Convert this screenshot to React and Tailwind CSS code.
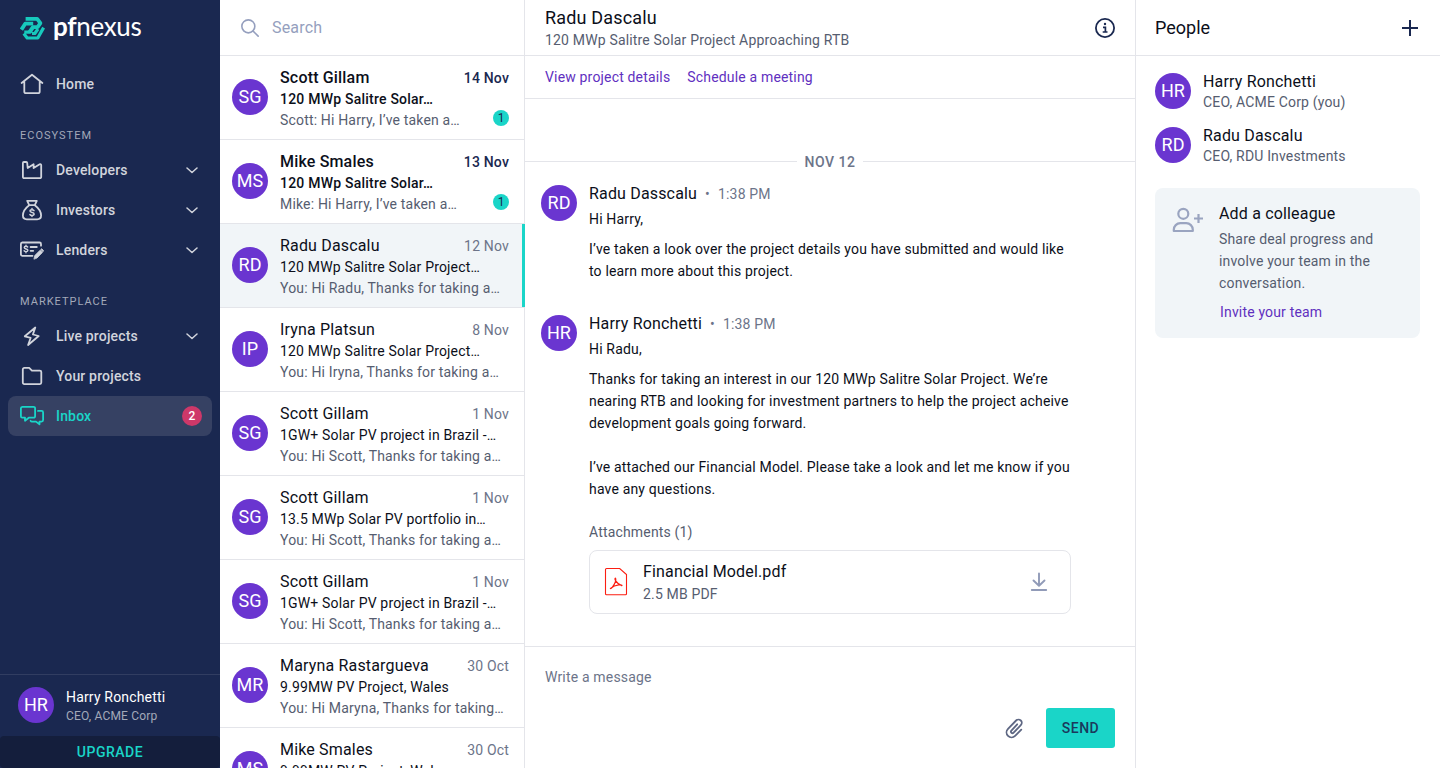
const PURPLE_AVATAR =
  'flex size-9 shrink-0 items-center justify-center rounded-full bg-[#6a35d0] text-lg tracking-normal text-white';

function Avatar({ initials }) {
  return <div className={PURPLE_AVATAR}>{initials}</div>;
}

function Icon({ children, className = 'size-6', width = 1.8 }) {
  return (
    <svg
      viewBox="0 0 24 24"
      className={`shrink-0 ${className}`}
      fill="none"
      stroke="currentColor"
      strokeWidth={width}
      strokeLinecap="round"
      strokeLinejoin="round"
    >
      {children}
    </svg>
  );
}

const icons = {
  home: (
    <path d="M1.6 11 12 2.8 22.4 11M4.3 9.2v10.2a1.8 1.8 0 0 0 1.8 1.8h11.8a1.8 1.8 0 0 0 1.8-1.8V9.2" />
  ),
  factory: (
    <path d="M2.9 19V5a1 1 0 0 1 1-1h2.3a1 1 0 0 1 1 .9L7.7 10l5.9-3.8v3.9l6.1-3.9a1 1 0 0 1 1.5.9V19a1.2 1.2 0 0 1-1.2 1.2H4.1A1.2 1.2 0 0 1 2.9 19Z" />
  ),
  bag: (
    <>
      <path d="M9.2 7.2 7.2 2.9h9.6l-2 4.3ZM9.2 7.2C5.6 9.9 2.9 13.6 2.9 17.6c0 2.4 1.5 3.7 3.9 3.7h10.4c2.4 0 3.9-1.3 3.9-3.7 0-4-2.7-7.7-6.3-10.4" />
      <path strokeWidth="1.5" d="M14 12.6c-.4-.6-1.1-.9-2-.9-1.2 0-2 .5-2 1.4 0 2 4.1.8 4.1 2.9 0 .9-.9 1.4-2.1 1.4-1 0-1.7-.3-2.1-.9M12 10.6v1M12 17.5v1" />
    </>
  ),
  lender: (
    <>
      <path d="M12.5 17.8H2.3A1.5 1.5 0 0 1 .9 16.3V6A1.5 1.5 0 0 1 2.3 4.5h17.2A1.5 1.5 0 0 1 21 6v1.7" />
      <path strokeWidth="1.4" d="M7.7 9c-.4-.5-1-.7-1.7-.7-1.1 0-1.8.5-1.8 1.3 0 1.9 3.7.8 3.7 2.7 0 .8-.8 1.3-1.9 1.3-.9 0-1.5-.3-1.9-.8M6 7.3v1M6 13.7v1" />
      <path d="M10.6 9h6.2M10.6 12.8h2.6" />
      <path fill="currentColor" strokeWidth=".8" d="m14 20.8.8-3.3 5.3-5.3 2.3 2.3-5.3 5.4ZM20.9 11.400l.8-.7 2 2-.7.9Z" />
    </>
  ),
  bolt: <path d="M15.3 3.5 4.8 12.3l5.9 1.5-2.6 7.2L18.7 12l-5.8-1.5Z" />,
  folder: (
    <path d="M2.8 18.6V5.4A1.5 1.5 0 0 1 4.3 3.9h4.9l2.7 2.7h7.9a1.5 1.5 0 0 1 1.5 1.5v10.5a1.5 1.5 0 0 1-1.5 1.5H4.3a1.5 1.5 0 0 1-1.5-1.5Z" />
  ),
  chat: (
    <>
      <path d="M5 13.7H2.3A1.5 1.5 0 0 1 .9 12.2V4.3A1.5 1.5 0 0 1 2.3 2.8h11.3a1.5 1.5 0 0 1 1.5 1.5v7.9a1.5 1.5 0 0 1-1.5 1.5H8.8L5 16.7Z" />
      <path d="M18 6.9h3.6a1.5 1.5 0 0 1 1.5 1.5v7.7a1.5 1.5 0 0 1-1.5 1.5h-2.1v2.7l-3.5-2.7h-4.1a1.5 1.5 0 0 1-1.3-.8" />
    </>
  ),
};

function Logo() {
  return (
    <div className="flex h-14 items-center pl-5">
      <svg viewBox="0 0 25 23" className="h-[23px] w-[25px]" fill="none" stroke="#17c9bd" strokeWidth="3.8" strokeLinejoin="round">
        <path d="M5.6 1.9H17.2L20.4 6.200 17.600 10.200H12.700L9.500 15" />
        <path d="M1.400 12.600 5.200 6.700H13.200" />
        <path d="M4.300 15.200H10.200L12.600 11.500" strokeWidth="3.200" />
        <path d="M3.800 16.500 7.200 21H17.800L23.600 10.600M12 16.500H14.800L18 12" strokeWidth="3.200" />
      </svg>
      <div className="ml-2 -mt-1 font-[Lato] text-[26px] leading-7 tracking-[-0.3px] text-white">
        <span className="font-bold">pf</span>
        <span>nexus</span>
      </div>
    </div>
  );
}

function NavItem({ icon, label, chevron, active, count }) {
  return (
    <div
      className={`mx-2 flex h-10 items-center rounded-lg px-3 text-sm font-medium ${
        active ? 'bg-[#364163] text-[#1ad5c8]' : 'text-[#d1d4dc]'
      }`}
    >
      <Icon>{icons[icon]}</Icon>
      <span className="ml-3">{label}</span>
      {chevron && (
        <Icon className="mr-0.5 ml-auto size-3" width={3}>
          <path d="m2 8 10 9 10-9" />
        </Icon>
      )}
      {count && (
        <span className="-mr-0.5 ml-auto flex size-5 items-center justify-center rounded-full bg-[#ce3869] text-xs tracking-normal text-white">
          {count}
        </span>
      )}
    </div>
  );
}

function NavHeading({ children }) {
  return <div className="mt-6 mb-1.5 pl-5 text-[11px] leading-4 tracking-[1px] text-[#a3a9b9]">{children}</div>;
}

function Sidebar() {
  return (
    <aside className="flex w-[220px] shrink-0 flex-col bg-[#1a2850]">
      <Logo />
      <nav className="mt-2 flex flex-col">
        <NavItem icon="home" label="Home" />
        <NavHeading>ECOSYSTEM</NavHeading>
        <NavItem icon="factory" label="Developers" chevron />
        <NavItem icon="bag" label="Investors" chevron />
        <NavItem icon="lender" label="Lenders" chevron />
        <NavHeading>MARKETPLACE</NavHeading>
        <NavItem icon="bolt" label="Live projects" chevron />
        <NavItem icon="folder" label="Your projects" />
        <NavItem icon="chat" label="Inbox" active count="2" />
      </nav>
      <div className="mt-auto flex h-[62px] items-start border-t border-[#313d61] pt-3 pl-[18px]">
        <Avatar initials="HR" />
        <div className="mt-px ml-3">
          <div className="text-sm leading-[19px] text-white">Harry Ronchetti</div>
          <div className="text-xs leading-[18px] text-[#a3a9b9]">CEO, ACME Corp</div>
        </div>
      </div>
      <div className="flex h-8 items-center justify-center rounded bg-[#141e3c] text-sm font-medium tracking-[0.5px] text-[#1ad5c8]">
        UPGRADE
      </div>
    </aside>
  );
}

const threads = [
  { initials: 'SG', name: 'Scott Gillam', date: '14 Nov', subject: '120 MWp Salitre Solar…', preview: 'Scott: Hi Harry, I’ve taken a…', unread: 1 },
  { initials: 'MS', name: 'Mike Smales', date: '13 Nov', subject: '120 MWp Salitre Solar…', preview: 'Mike: Hi Harry, I’ve taken a…', unread: 1 },
  { initials: 'RD', name: 'Radu Dascalu', date: '12 Nov', subject: '120 MWp Salitre Solar Project…', preview: 'You: Hi Radu, Thanks for taking a…', selected: true },
  { initials: 'IP', name: 'Iryna Platsun', date: '8 Nov', subject: '120 MWp Salitre Solar Project…', preview: 'You: Hi Iryna, Thanks for taking a…' },
  { initials: 'SG', name: 'Scott Gillam', date: '1 Nov', subject: '1GW+ Solar PV project in Brazil -…', preview: 'You: Hi Scott, Thanks for taking a…' },
  { initials: 'SG', name: 'Scott Gillam', date: '1 Nov', subject: '13.5 MWp Solar PV portfolio in…', preview: 'You: Hi Scott, Thanks for taking a…' },
  { initials: 'SG', name: 'Scott Gillam', date: '1 Nov', subject: '1GW+ Solar PV project in Brazil -…', preview: 'You: Hi Scott, Thanks for taking a…' },
  { initials: 'MR', name: 'Maryna Rastargueva', date: '30 Oct', subject: '9.99MW PV Project, Wales', preview: 'You: Hi Maryna, Thanks for taking…' },
  { initials: 'MS', name: 'Mike Smales', date: '30 Oct', subject: '9.99MW PV Project, Wales' },
];

function Thread({ initials, name, date, subject, preview, unread, selected }) {
  return (
    <div className={`relative flex h-21 shrink-0 border-b border-[#e4e5ea] pl-3 ${selected ? 'bg-[#f1f5f8]' : ''}`}>
      <div className="mt-[23px]">
        <Avatar initials={initials} />
      </div>
      <div className="ml-3 flex-1 pt-[11px] pr-[15px] text-sm leading-[21px] whitespace-nowrap">
        <div className="flex justify-between">
          <span className={`text-base leading-[21px] text-[#0c0f1a] ${unread ? 'font-medium' : ''}`}>{name}</span>
          <span className={`leading-[22px] ${unread ? 'font-medium text-[#1a2850]' : 'text-[#6c7489]'}`}>{date}</span>
        </div>
        <div className={`text-[#0c0f1a] ${unread ? 'font-medium tracking-[0.22px]' : ''}`}>{subject}</div>
        <div className="flex items-start justify-between text-[#565d70]">
          {preview}
          {unread && (
            <span className="flex size-4 items-center justify-center rounded-full bg-[#1ad5c8] text-xs leading-4 tracking-normal text-[#1a2850]">
              {unread}
            </span>
          )}
        </div>
      </div>
      {selected && <div className="absolute top-0 -right-px h-[83px] w-[3px] bg-[#1ad5c8]" />}
    </div>
  );
}

function ThreadList() {
  return (
    <section className="flex w-[305px] shrink-0 flex-col border-r border-[#e4e5ea]">
      <div className="flex h-14 shrink-0 items-center border-b border-[#e4e5ea] pl-5 text-base text-[#959fbe]">
        <Icon className="size-5" width={1.9}>
          <circle cx="10" cy="10" r="7.8" />
          <path d="m15.8 15.8 6 6" />
        </Icon>
        <span className="ml-3">Search</span>
      </div>
      {threads.map((t, i) => (
        <Thread key={i} {...t} />
      ))}
    </section>
  );
}

function Message({ initials, name, time, children }) {
  return (
    <div className="flex pl-4">
      <Avatar initials={initials} />
      <div className="ml-3 w-[482px] text-sm leading-[22px] whitespace-nowrap text-[#0c0f1a]">
        <div className="flex h-[18px] items-center">
          <span className="text-base">{name}</span>
          <span className="mx-2 text-[#6c7489]">•</span>
          <span className="text-[#6c7489]">{time}</span>
        </div>
        {children}
      </div>
    </div>
  );
}

function Conversation() {
  return (
    <main className="flex w-[610px] shrink-0 flex-col">
      <header className="flex h-14 shrink-0 items-center justify-between border-b border-[#e4e5ea] px-5">
        <div>
          <div className="text-lg leading-6 text-[#0c0f1a]">Radu Dascalu</div>
          <div className="text-sm leading-5 text-[#565d70]">120 MWp Salitre Solar Project Approaching RTB</div>
        </div>
        <svg viewBox="0 0 20 20" className="size-5 text-[#1a2850]" fill="none" stroke="currentColor">
          <circle cx="10" cy="10" r="9.1" strokeWidth="1.8" />
          <path d="M8 9.3h2.4v4.4M7.700 14h4.800" strokeWidth="1.7" />
          <circle cx="10" cy="6" r="1.2" fill="currentColor" stroke="none" />
        </svg>
      </header>
      <div className="flex h-[43px] shrink-0 items-center gap-[17px] border-b border-[#e4e5ea] px-5 text-sm text-[#5f30bf]">
        <span>View project details</span>
        <span>Schedule a meeting</span>
      </div>
      <div className="flex flex-1 flex-col">
        <div className="mt-[52px] flex h-5 items-center gap-2">
          <div className="h-px flex-1 bg-[#e4e5ea]" />
          <span className="pt-0.5 text-sm leading-5 font-medium tracking-[0.5px] text-[#6c7489]">NOV 12</span>
          <div className="h-px flex-1 bg-[#e4e5ea]" />
        </div>
        <div className="mt-3.5">
          <Message initials="RD" name="Radu Dasscalu" time="1:38 PM">
            <p className="mt-[5px]">Hi Harry,</p>
            <p className="mt-2">
              I’ve taken a look over the project details you have submitted and would like
              <br />
              to learn more about this project.
            </p>
          </Message>
        </div>
        <div className="mt-[33px]">
          <Message initials="HR" name="Harry Ronchetti" time="1:38 PM">
            <p className="mt-[5px]">Hi Radu,</p>
            <p className="mt-2">
              Thanks for taking an interest in our 120 MWp Salitre Solar Project. We’re
              <br />
              nearing RTB and looking for investment partners to help the project acheive
              <br />
              development goals going forward.
            </p>
            <p className="mt-[22px]">
              I’ve attached our Financial Model. Please take a look and let me know if you
              <br />
              have any questions.
            </p>
            <div className="mt-[21px] text-[#565d70]">Attachments (1)</div>
            <div className="mt-[7px] flex h-16 items-center rounded-lg border border-[#e4e5ea] pr-[19px] pl-3.5">
              <svg viewBox="0 0 24 30" className="h-[30px] w-6" fill="none" stroke="#fb1e12" strokeWidth="1.1">
                <path d="M2.5 1.5h13.2l6.800 6v19.3a1 1 0 0 1-1 1h-19a1 1 0 0 1-1-1V2.5a1 1 0 0 1 1-1Z" />
                <path strokeWidth="1.3" strokeLinejoin="round" d="M11.5 11.200c-1.500 0 .5 5.300 6.200 7.400 1.600-.8-5.600-2-11.300 2.800.8 1.300 6.500-6.500 5.100-10.200Z" />
              </svg>
              <div className="mt-0.5 ml-[15px]">
                <div className="text-base leading-[22px]">Financial Model.pdf</div>
                <div className="text-[#565d70]">2.5 MB PDF</div>
              </div>
              <Icon className="ml-auto size-6 text-[#919bb8]" width={1.9}>
                <path d="M12 3.5v12M6.5 10.5l5.5 5.3 5.5-5.3M4.8 20h14.4" />
              </Icon>
            </div>
          </Message>
        </div>
      </div>
      <footer className="flex h-[122px] shrink-0 flex-col border-t border-[#e4e5ea] px-5 text-sm">
        <div className="mt-[19px] leading-[22px] text-[#6c7489]">Write a message</div>
        <div className="mt-5 flex h-10 items-center justify-end">
          <Icon className="mr-5 size-6 text-[#5e6783]" width={1.8}>
            <path d="M15.2 8.3 9.4 14.6a1.500 1.500 0 0 0 2.2 2.1l7.2-7.5a3.3 3.3 0 0 0-4.7-4.7L6 12.8a5 5 0 0 0 7.1 7.1l6.2-6.3" />
          </Icon>
          <div className="flex h-10 w-[69px] items-center justify-center rounded-[3px] bg-[#1ad5c8] font-medium tracking-[0.5px] text-[#1a3a5c]">
            SEND
          </div>
        </div>
      </footer>
    </main>
  );
}

function Person({ initials, name, role }) {
  return (
    <div className="flex h-9 gap-3">
      <Avatar initials={initials} />
      <div className="-mt-px">
        <div className="text-base leading-5 text-[#0c0f1a]">{name}</div>
        <div className="text-sm leading-5 text-[#565d70]">{role}</div>
      </div>
    </div>
  );
}

function People() {
  return (
    <aside className="w-[305px] shrink-0 border-l border-[#e4e5ea]">
      <div className="flex h-14 items-center justify-between border-b border-[#e4e5ea] pr-[22px] pl-[19px] text-lg tracking-normal text-[#0c0f1a]">
        People
        <svg viewBox="0 0 16 16" className="size-4" stroke="#1a2850" strokeWidth="2">
          <path d="M8 0v16M0 8h16" />
        </svg>
      </div>
      <div className="flex flex-col gap-[18px] pt-[17px] pl-[19px]">
        <Person initials="HR" name="Harry Ronchetti" role="CEO, ACME Corp (you)" />
        <Person initials="RD" name="Radu Dascalu" role="CEO, RDU Investments" />
      </div>
      <div className="mt-[25px] mr-5 ml-[19px] flex h-[150px] rounded-lg bg-[#f1f5f8] pt-[15px] pl-[17px]">
        <svg viewBox="0 0 32 28" className="mt-0.5 h-7 w-8 text-[#9aa4c0]" fill="none" stroke="currentColor" strokeWidth="2.2">
          <circle cx="11.3" cy="8.800" r="5" />
          <path strokeLinejoin="round" d="M1.8 26v-1.300a6.500 6.500 0 0 1 6.500-6.500h6a6.500 6.500 0 0 1 6.500 6.500v1.300Z" />
          <path d="M26.5 9v9M22 13.500h9" />
        </svg>
        <div className="ml-[15px] text-sm leading-[22px] text-[#565d70]">
          <div className="mb-[3px] text-base leading-[22px] text-[#0c0f1a]">Add a colleague</div>
          <p>
            Share deal progress and
            <br />
            involve your team in the
            <br />
            conversation.
          </p>
          <div className="mt-[7px] pl-px text-[#5f30bf]">Invite your team</div>
        </div>
      </div>
    </aside>
  );
}

export default function App() {
  return (
    <div className="flex h-[768px] w-[1440px] overflow-hidden bg-white font-[Roboto,sans-serif] tracking-[0.17px]">
      <Sidebar />
      <ThreadList />
      <Conversation />
      <People />
    </div>
  );
}
